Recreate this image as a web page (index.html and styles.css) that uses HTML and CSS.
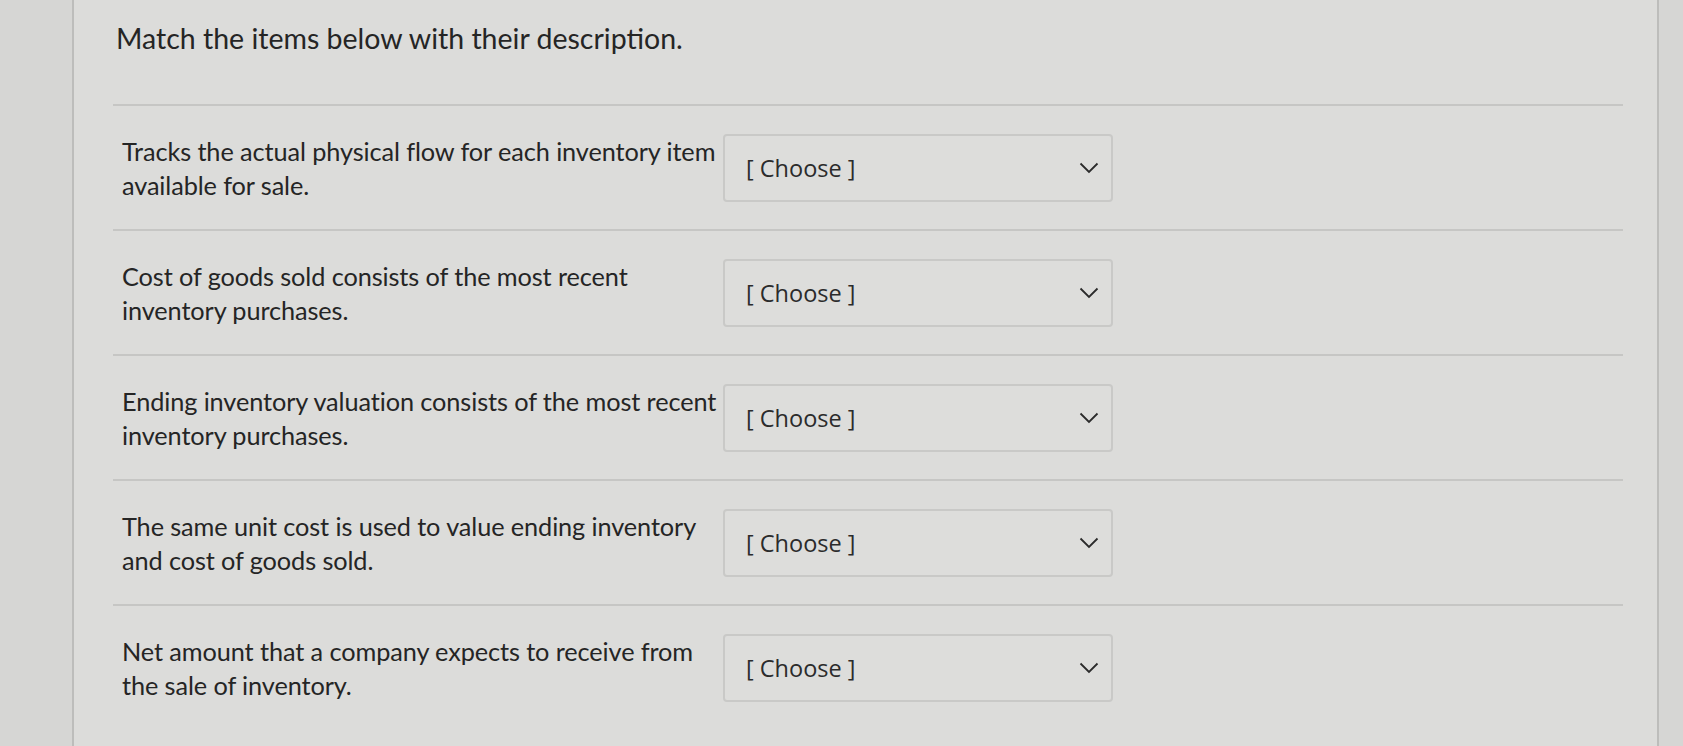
FILE: index.html
```html
<!DOCTYPE html>
<html lang="en">

<head>
    <meta charset="UTF-8">
    <meta name="viewport" content="width=device-width, initial-scale=1.0">
    <title>Matching Question</title>
    <link rel="stylesheet" href="styles.css">
</head>

<body>
    <div class="page">
        <h1 class="question-text">Match the items below with their description.</h1>

        <div class="answers">
            <div class="answer-row">
                <div class="answer-label">Tracks the actual physical flow for each inventory item available for sale.</div>
                <div class="choose">
                    <span>[ Choose ]</span>
                    <svg class="chevron" viewBox="0 0 20 12"><path d="M1.5 1.5 L10 10 L18.5 1.5" /></svg>
                </div>
            </div>
            <div class="answer-row">
                <div class="answer-label">Cost of goods sold consists of the most recent inventory purchases.</div>
                <div class="choose">
                    <span>[ Choose ]</span>
                    <svg class="chevron" viewBox="0 0 20 12"><path d="M1.5 1.5 L10 10 L18.5 1.5" /></svg>
                </div>
            </div>
            <div class="answer-row">
                <div class="answer-label">Ending inventory valuation consists of the most recent inventory purchases.</div>
                <div class="choose">
                    <span>[ Choose ]</span>
                    <svg class="chevron" viewBox="0 0 20 12"><path d="M1.5 1.5 L10 10 L18.5 1.5" /></svg>
                </div>
            </div>
            <div class="answer-row">
                <div class="answer-label">The same unit cost is used to value ending inventory and cost of goods sold.</div>
                <div class="choose">
                    <span>[ Choose ]</span>
                    <svg class="chevron" viewBox="0 0 20 12"><path d="M1.5 1.5 L10 10 L18.5 1.5" /></svg>
                </div>
            </div>
            <div class="answer-row">
                <div class="answer-label">Net amount that a company expects to receive from the sale of inventory.</div>
                <div class="choose">
                    <span>[ Choose ]</span>
                    <svg class="chevron" viewBox="0 0 20 12"><path d="M1.5 1.5 L10 10 L18.5 1.5" /></svg>
                </div>
            </div>
        </div>
    </div>
</body>

</html>
```

FILE: styles.css
```css
body {
    margin: 0;
    padding: 0;
    background-color: #d6d6d4;
    font-family: Lato, "Open Sans", sans-serif;
    color: #252525;
}

.page {
    margin-left: 72px;
    width: 1587px;
    height: 746px;
    box-sizing: border-box;
    border-left: 2px solid #bdbdbb;
    border-right: 2px solid #bdbdbb;
    background-color: #dcdcda;
    padding: 20px 34px 0 39px;
}

.question-text {
    margin: 0 0 0 3px;
    font-size: 28.5px;
    font-weight: 400;
    line-height: 36px;
}

.answers {
    margin-top: 48px;
}

.answer-row {
    display: flex;
    align-items: center;
    height: 123px;
    border-top: 2px solid #c6c6c4;
    padding-left: 9px;
}

.answer-label {
    width: 600px;
    font-size: 25.3px;
    line-height: 34px;
    letter-spacing: -0.1px;
}

.choose {
    display: flex;
    align-items: center;
    justify-content: space-between;
    width: 390px;
    height: 68px;
    margin-left: 1px;
    box-sizing: border-box;
    padding: 0 12px 0 21px;
    border: 2px solid #c9c9c7;
    border-radius: 4px;
    background-color: #dddddb;
    font-family: "Open Sans", sans-serif;
    font-size: 23.5px;
    color: #2b2b2b;
}

.chevron {
    width: 20px;
    height: 12px;
    fill: none;
    stroke: #2b2b2b;
    stroke-width: 1.8;
}
```
